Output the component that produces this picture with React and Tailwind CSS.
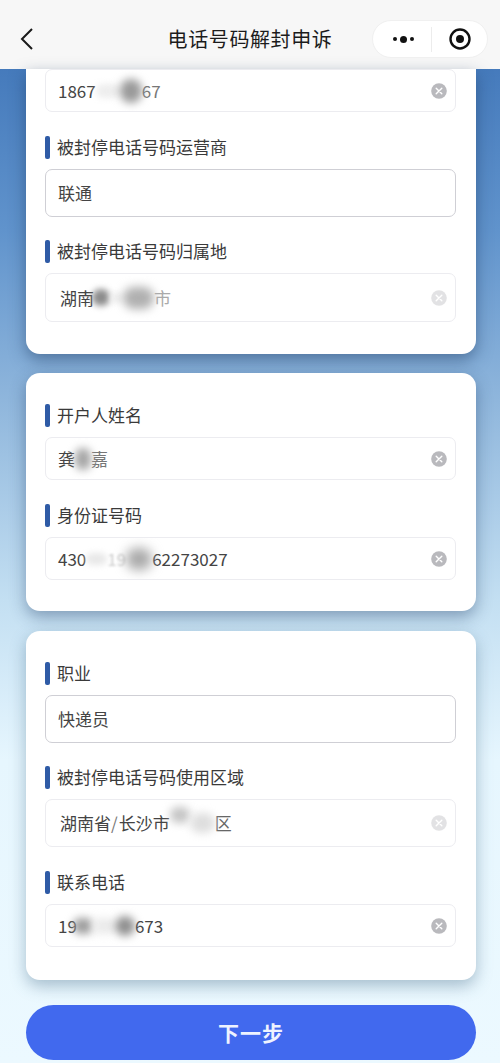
import React from "react";

const font = { fontFamily: '"Noto Sans CJK SC", "Noto Sans", sans-serif' };

function ClearIcon({ faded }) {
  return (
    <svg width="16" height="16" viewBox="0 0 16 16" className={`shrink-0 ${faded ? "opacity-40" : ""}`}>
      <circle cx="8" cy="8" r="7.8" fill="#b9b9bd" />
      <path d="M5.2 5.2l5.6 5.6M10.8 5.2l-5.6 5.6" stroke="#fff" strokeWidth="1.4" strokeLinecap="round" />
    </svg>
  );
}

// the blurred patch that hides part of a value
function Patch({ className }) {
  return <span className={`inline-block shrink-0 rounded-full ${className}`} />;
}

function Field({ label, height, strong, faded, spacing = "", inset = "pl-[12px]", children }) {
  return (
    <div className={spacing}>
      {label && (
        <div className="flex items-center h-[23px] mb-[10px]">
          <span className="w-[5px] h-[23px] rounded-[2px] bg-[#2f5ba6]" />
          <span className="ml-[7px] text-[17px] leading-[23px] text-[#3a3a3a] -translate-y-[1px]">{label}</span>
        </div>
      )}
      <div
        className={`flex items-center justify-between bg-white rounded-[7px] border overflow-hidden ${height} ${inset} ${
          strong ? "border-[#cfcfd5]" : "border-[#ececf0] pr-[8px]"
        }`}
      >
        <div className="flex items-center text-[17px] text-[#444]">{children}</div>
        {!strong && <ClearIcon faded={faded} />}
      </div>
    </div>
  );
}

export default function App() {
  return (
    <div
      className="w-[500px] h-[1063px] overflow-hidden bg-[linear-gradient(180deg,#3a70b5_0px,#6093cc_230px,#8fb6dc_400px,#c3dff2_600px,#e6f6fe_760px,#ecf9ff_1063px)]"
      style={font}
    >
      <div className="h-[69px] bg-[#f7f7f7] grid grid-cols-[128px_1fr_128px] items-center pt-[9px]">
        <svg width="16" height="24" viewBox="0 0 16 24" className="ml-[19px]">
          <path d="M13 2L3 12l10 10" fill="none" stroke="#1a1a1a" strokeWidth="2" />
        </svg>
        <div className="text-center text-[20px] leading-[34px] tracking-[0.6px] text-[#1c1c1c] whitespace-nowrap">
          电话号码解封申诉
        </div>
        <div className="w-[116px] h-[38px] rounded-full bg-white border border-[#f0f0f0] flex items-center">
          <div className="w-[58px] flex items-center justify-center gap-[3px] pl-[2px]">
            <span className="w-[4px] h-[4px] rounded-full bg-[#111]" />
            <span className="w-[7px] h-[7px] rounded-full bg-[#111]" />
            <span className="w-[4px] h-[4px] rounded-full bg-[#111]" />
          </div>
          <span className="w-px h-[25px] bg-[#ececec]" />
          <div className="flex-1 flex items-center justify-center">
            <svg width="22" height="22" viewBox="0 0 22 22">
              <circle cx="11" cy="11" r="9.5" fill="none" stroke="#111" strokeWidth="2.4" />
              <circle cx="11" cy="11" r="4" fill="#111" />
            </svg>
          </div>
        </div>
      </div>

      <div className="ml-[26px] w-[450px]">
        <div className="bg-white rounded-b-[14px] pl-[19px] pr-[20px] pb-[32px] shadow-[0_6px_16px_rgba(30,60,100,0.5)]">
          <Field height="h-[43px]">
            <span>1867</span>
            <Patch className="w-[24px] h-[14px] bg-[#eeeeee] blur-[3px]" />
            <Patch className="w-[22px] h-[24px] bg-[#9a9a9a] blur-[4px]" />
            <span className="text-[#777]">67</span>
          </Field>
          <Field spacing="mt-[24px]" label="被封停电话号码运营商" height="h-[48px]" strong>
            联通
          </Field>
          <Field spacing="mt-[23px]" label="被封停电话号码归属地" height="h-[49px]" faded inset="pl-[14px]">
            <span>湖南</span>
            <Patch className="-ml-[2px] w-[18px] h-[17px] bg-[#8c8c8c] blur-[3px]" />
            <Patch className="w-[13px] h-[10px] bg-[#eeeeee] blur-[3px]" />
            <Patch className="w-[31px] h-[22px] bg-[#b0b0b0] blur-[5px]" />
            <span className="text-[#aaa]">市</span>
          </Field>
        </div>

        <div className="mt-[19px] bg-white rounded-[14px] pl-[19px] pr-[20px] pt-[31px] pb-[31px] shadow-[0_6px_16px_rgba(30,60,100,0.42)]">
          <Field label="开户人姓名" height="h-[43px]">
            <span>龚</span>
            <Patch className="w-[16px] h-[22px] bg-[#a5a5a5] blur-[4px]" />
            <span className="text-[#777]">嘉</span>
          </Field>
          <Field spacing="mt-[24px]" label="身份证号码" height="h-[43px]">
            <span>430</span>
            <Patch className="w-[21px] h-[12px] bg-[#e8e8e8] blur-[3px]" />
            <span className="text-[#ccc] blur-[1px]">19</span>
            <Patch className="w-[26px] h-[22px] bg-[#a8a8a8] blur-[6px]" />
            <span>62273027</span>
          </Field>
        </div>

        <div className="mt-[20px] bg-white rounded-[14px] pl-[19px] pr-[20px] pt-[31px] pb-[33px] shadow-[0_6px_16px_rgba(60,100,130,0.4)]">
          <Field label="职业" height="h-[48px]" strong>
            快递员
          </Field>
          <Field spacing="mt-[23px]" label="被封停电话号码使用区域" height="h-[48px]" faded inset="pl-[14px]">
            <span>湖南省</span>
            <span className="mr-[1px] text-[#777]">/</span>
            <span>长沙市</span>
            <Patch className="w-[20px] h-[16px] bg-[#c4c4c4] blur-[4px] -translate-y-[8px]" />
            <Patch className="w-[25px] h-[20px] bg-[#dedede] blur-[4px]" />
            <span className="text-[#666]">区</span>
          </Field>
          <Field spacing="mt-[24px]" label="联系电话" height="h-[43px]">
            <span>19</span>
            <Patch className="-ml-[4px] w-[20px] h-[16px] bg-[#9c9c9c] blur-[4px]" />
            <Patch className="w-[22px] h-[16px] bg-[#eaeaea] blur-[4px]" />
            <Patch className="w-[20px] h-[20px] bg-[#8f8f8f] blur-[4px]" />
            <span>673</span>
          </Field>
        </div>

        <div className="mt-[25px] h-[55px] rounded-full bg-[#4169ee] flex items-center justify-center text-[21px] font-bold tracking-[1px] text-[#eef3ff]">
          下一步
        </div>
      </div>
    </div>
  );
}
